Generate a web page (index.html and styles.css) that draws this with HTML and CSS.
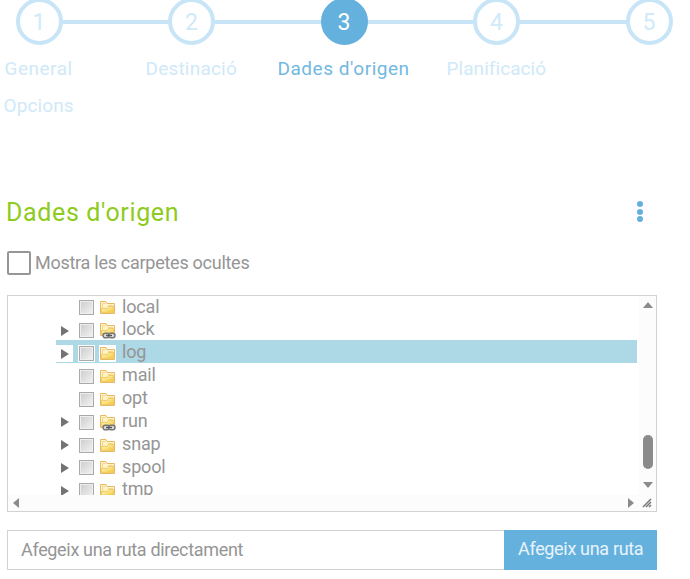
FILE: index.html
```
<!DOCTYPE html>
<html lang="ca">
<head>
<meta charset="utf-8">
<title>Dades d'origen</title>
<link rel="stylesheet" href="styles.css">
</head>
<body>
<svg class="defs" aria-hidden="true">
  <defs>
    <linearGradient id="gold" x1="0" y1="0" x2="1" y2="1"><stop offset="0" stop-color="#fffbd8"/><stop offset="1" stop-color="#f3c62c"/></linearGradient>
    <symbol id="folder" viewBox="0 0 17 17">
      <path d="M1.5 14.5V2.5h5.5l1 2h7.500v10z" fill="#fff3c4" stroke="#e8b964"/>
      <path d="M3.5 11V4.500h3M9 6.500h5" fill="none" stroke="#f5d795"/>
      <path d="M2.500 13.500v-4H8l1.500-2h5v6z" fill="url(#gold)" stroke="#f0cb66"/>
    </symbol>
    <symbol id="linked" viewBox="0 0 17 17">
      <use href="#folder" width="17" height="17" y="-1"/>
      <rect x="4" y="11.200" width="6.500" height="4.600" rx="2.300" fill="#ddd" stroke="#777" stroke-width="1.500"/>
      <rect x="9.500" y="11.200" width="6.500" height="4.600" rx="2.300" fill="#ddd" stroke="#777" stroke-width="1.500"/>
      <path d="M7 13.500h6" stroke="#555" stroke-width="1.500"/>
    </symbol>
  </defs>
</svg>
<nav class="wizard">
  <ol class="steps"><li>1</li><li>2</li><li class="active">3</li><li>4</li><li>5</li></ol>
  <div class="labels">
    <span class="general">General</span><span class="dest">Destinació</span><span class="source">Dades d'origen</span><span class="plan">Planificació</span>
    <span class="options">Opcions</span>
  </div>
</nav>
<main>
  <header class="heading"><h2>Dades d'origen</h2><div class="menu"><i></i><i></i><i></i></div></header>
  <label class="hidden-toggle"><span class="box"></span><span class="toggle-text">Mostra les carpetes ocultes</span></label>
  <section class="tree">
    <ul class="rows">
      <li><i class="arrow leaf"></i><i class="check"></i><svg><use href="#folder"/></svg><span>local</span></li>
      <li><i class="arrow"></i><i class="check"></i><svg><use href="#linked"/></svg><span>lock</span></li>
      <li class="selected"><i class="arrow"></i><i class="check"></i><svg><use href="#folder"/></svg><span>log</span></li>
      <li><i class="arrow leaf"></i><i class="check"></i><svg><use href="#folder"/></svg><span>mail</span></li>
      <li><i class="arrow leaf"></i><i class="check"></i><svg><use href="#folder"/></svg><span>opt</span></li>
      <li><i class="arrow"></i><i class="check"></i><svg><use href="#linked"/></svg><span>run</span></li>
      <li><i class="arrow"></i><i class="check"></i><svg><use href="#folder"/></svg><span>snap</span></li>
      <li><i class="arrow"></i><i class="check"></i><svg><use href="#folder"/></svg><span>spool</span></li>
      <li><i class="arrow"></i><i class="check"></i><svg><use href="#folder"/></svg><span>tmp</span></li>
    </ul>
    <div class="vbar"><i class="up"></i><i class="thumb"></i><i class="down"></i></div>
    <div class="hbar"><i class="left"></i><i class="right"></i></div>
    <svg class="grip" viewBox="0 0 17 16"><path d="M4 12l8-8M7 12l5-5M10 12l2-2" fill="none" stroke="#777" stroke-width="1.5"/></svg>
  </section>
  <div class="path-row"><div class="path-input"><span>Afegeix una ruta directament</span></div><div class="add"><span>Afegeix una ruta</span></div></div>
</main>
</body>
</html>
```
FILE: styles.css
```
* { box-sizing: border-box; }
body { margin: 0; background: #fff; color: #959595; font: 18px/23px Roboto, "Noto Sans", sans-serif; overflow: hidden; height: 579px; }
ol, ul, h2 { margin: 0; padding: 0; list-style: none; font-weight: 400; }
.defs { position: absolute; width: 0; height: 0; }
.wizard { height: 194px; padding-top: 1px; margin-top: -1px; }
.steps { display: flex; justify-content: space-between; width: 657px; margin: -2px 0 0 15.5px; height: 47px; background: linear-gradient(#c7e5f7, #c7e5f7) 20px 22px / 610px 4px no-repeat; }
.steps li { width: 47px; height: 47px; border: 4px solid #c7e5f7; border-radius: 50%; background: #fff; color: #d0eafa; font-size: 23px; line-height: 41px; text-align: center; }
.steps .active { background: #65b1de; border-color: #65b1de; color: #fff; }
.labels { display: grid; grid-template-columns: 141px 132px 169px 150px; grid-auto-rows: 37px; margin: 5px 0 0 4.5px; color: #cfe9f9; font-size: 19px; line-height: 37px; white-space: nowrap; }
.source { color: #72b8e1; letter-spacing: .53px; }
.general { letter-spacing: .5px; }
.dest { letter-spacing: .2px; }
.plan { letter-spacing: .05px; }
.options { letter-spacing: .1px; margin-left: -1px; }
main { width: 650px; margin-left: 7px; }
.heading { height: 58px; display: flex; justify-content: space-between; padding-right: 14px; }
.heading h2 { font-size: 25px; line-height: 39px; letter-spacing: .65px; color: #8dcb20; margin-left: -1px; }
.menu { display: flex; flex-direction: column; gap: 1.7px; padding-top: 8px; }
.menu i { width: 6px; height: 6px; border-radius: 50%; background: #65b1de; }
.hidden-toggle { display: flex; height: 43px; gap: 4px; margin-bottom: 1px; }
.toggle-text { letter-spacing: -.27px; }
.box { width: 24px; height: 24px; border: 2px solid #969696; border-radius: 2px; }
.tree { display: grid; grid-template: 199px 16px / 631px 17px; width: 650px; height: 217px; border: 1px solid #d2d2d2; }
.rows { overflow: hidden; padding: 0 2px 0 48px; }
.rows li { display: flex; align-items: flex-end; height: 22.86px; }
.rows li:first-child { margin-top: -1.4px; }
.selected { background: #add8e6; }
.arrow { width: 17px; height: 17px; margin-bottom: 1px; background: #fff; display: flex; align-items: center; padding-left: 5px; }
.arrow::before { content: ""; border-left: 8px solid #737373; border-top: 5.5px solid transparent; border-bottom: 5.5px solid transparent; }
.leaf::before { visibility: hidden; }
.check { width: 15px; height: 15px; margin: 0 0 2px 6px; border: 1px solid #aaa; outline: 1px solid #fff; background: linear-gradient(135deg, #ccc, #f3f3f3); box-shadow: inset 0 0 0 1px #eee; }
.rows svg { width: 17px; height: 17px; margin: 0 0 1px 5px; background: #fff; overflow: hidden; }
.rows span { margin-left: 6px; align-self: flex-start; letter-spacing: -.15px; }
.vbar, .hbar, .grip { background: #fcfcfc; }
.vbar { display: flex; flex-direction: column; align-items: center; }
.up { border: 5px solid transparent; border-top: 0; border-bottom: 6px solid #8b8b8b; margin-top: 6px; }
.thumb { width: 10px; height: 34px; border-radius: 5px; background: #8b8b8b; margin-top: 127px; }
.down { border: 5px solid transparent; border-bottom: 0; border-top: 6px solid #8b8b8b; margin-top: 13px; }
.hbar { display: flex; justify-content: space-between; align-items: center; padding: 0 5px; }
.left { border: 5px solid transparent; border-left: 0; border-right: 6px solid #8b8b8b; }
.right { border: 5px solid transparent; border-right: 0; border-left: 6px solid #8b8b8b; }
.grip { width: 17px; height: 16px; }
.path-row { display: flex; height: 40px; margin-top: 18px; line-height: 38px; }
.path-input { width: 497px; border: 1px solid #d2d2d2; border-right: 0; padding-left: 13px; letter-spacing: -.33px; }
.add { width: 153px; background: #65b1de; color: #e8f4fb; padding-left: 14px; white-space: nowrap; letter-spacing: -.33px; }
```
